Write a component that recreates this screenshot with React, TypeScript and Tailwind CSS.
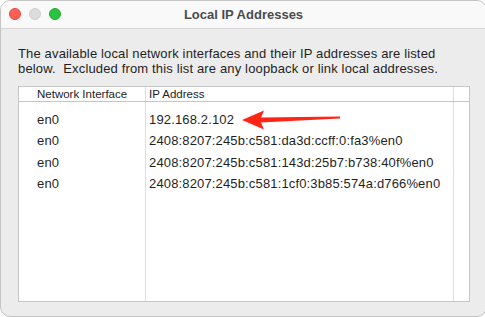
const rows = [
  { iface: "en0", ip: "192.168.2.102" },
  { iface: "en0", ip: "2408:8207:245b:c581:da3d:ccff:0:fa3%en0" },
  { iface: "en0", ip: "2408:8207:245b:c581:143d:25b7:b738:40f%en0" },
  { iface: "en0", ip: "2408:8207:245b:c581:1cf0:3b85:574a:d766%en0" },
];

function Arrow() {
  return (
    <svg width="100" height="22" viewBox="0 0 100 22" className="absolute left-[96px] top-[-1px]">
      <path d="M0 11 L22 1.5 L19 8.5 L98 7.5 L98 9.5 L19 13.5 L22 20.5 Z" fill="#ff2617" />
    </svg>
  );
}

export default function App() {
  return (
    <div className="w-[485px] h-[317px] bg-white overflow-hidden font-['Liberation_Sans',sans-serif]">
      <div className="w-[487px] h-[317px] rounded-[10px] border border-[#c4c4c4] bg-[#ececec] overflow-hidden flex flex-col">
        <div className="h-[28px] shrink-0 bg-[#f9f9f9] border-b border-[#d6d6d6] relative flex items-center justify-center">
          <div className="absolute left-[8px] top-[7px] flex gap-[8px]">
            <span className="w-[12px] h-[12px] rounded-full bg-[#fe5f57] border border-[#e14942]" />
            <span className="w-[12px] h-[12px] rounded-full bg-[#dcdcdc] border border-[#cfcfcf]" />
            <span className="w-[12px] h-[12px] rounded-full bg-[#29c33f] border border-[#1faa31]" />
          </div>
          <span className="text-[13px] font-bold text-[#4b4b4b]">Local IP Addresses</span>
        </div>
        <div className="px-[17px] pt-[17px]">
          <p className="text-[13px] leading-[15px] text-[#1f1f1f] tracking-[0.15px]">
            The available local network interfaces and their IP addresses are listed
            <br />
            below.&nbsp; Excluded from this list are any loopback or link local addresses.
          </p>
          <div className="mt-[10px] w-[452px] h-[216px] bg-white border border-[#c6c6c6] flex flex-col">
            <div className="h-[15px] flex border-b border-[#c6c6c6] text-[11.5px] leading-[14px] text-[#222]">
              <div className="w-[127px] border-r border-[#dedede] pl-[18px]">Network Interface</div>
              <div className="w-[308px] border-r border-[#dedede] pl-[3px]">IP Address</div>
              <div className="flex-1" />
            </div>
            <div className="flex-1 flex">
              <div className="w-[127px] border-r border-[#dedede] pt-[8px] text-[13px] text-[#1f1f1f]">
                {rows.map((r, i) => (
                  <div key={i} className="h-[21.3px] leading-[20px] pl-[18px] tracking-[0.15px]">{r.iface}</div>
                ))}
              </div>
              <div className="w-[308px] border-r border-[#dedede] pt-[8px] text-[13px] text-[#1f1f1f]">
                {rows.map((r, i) => (
                  <div key={i} className="relative h-[21.3px] leading-[20px] pl-[3px] tracking-[0.15px]">
                    {r.ip}
                    {i === 0 && <Arrow />}
                  </div>
                ))}
              </div>
              <div className="flex-1" />
            </div>
          </div>
        </div>
      </div>
    </div>
  );
}
